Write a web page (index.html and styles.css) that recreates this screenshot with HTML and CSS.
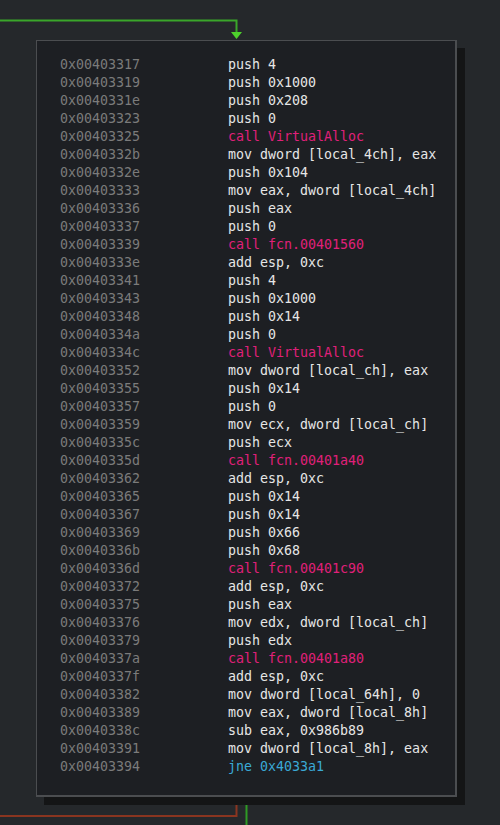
FILE: index.html
```html
<!DOCTYPE html>
<html>
<head>
<meta charset="utf-8">
<link rel="stylesheet" href="styles.css">
</head>
<body>
<div class="canvas">
  <svg class="edges" width="500" height="825" viewBox="0 0 500 825">
    <path d="M0 20.5 H236.5 V32" fill="none" stroke="#3aa62a" stroke-width="2"/>
    <polygon points="231,32 242,32 236.5,39" fill="#4ed22c"/>
    <path d="M236.5 797 V816 H0" fill="none" stroke="#8a3520" stroke-width="2"/>
    <path d="M246.5 797 V825" fill="none" stroke="#2f9a25" stroke-width="2"/>
  </svg>
  <div class="node">
    <div class="row"><span class="addr">0x00403317</span><span class="op">push 4</span></div>
    <div class="row"><span class="addr">0x00403319</span><span class="op">push 0x1000</span></div>
    <div class="row"><span class="addr">0x0040331e</span><span class="op">push 0x208</span></div>
    <div class="row"><span class="addr">0x00403323</span><span class="op">push 0</span></div>
    <div class="row"><span class="addr">0x00403325</span><span class="op call">call VirtualAlloc</span></div>
    <div class="row"><span class="addr">0x0040332b</span><span class="op">mov dword [local_4ch], eax</span></div>
    <div class="row"><span class="addr">0x0040332e</span><span class="op">push 0x104</span></div>
    <div class="row"><span class="addr">0x00403333</span><span class="op">mov eax, dword [local_4ch]</span></div>
    <div class="row"><span class="addr">0x00403336</span><span class="op">push eax</span></div>
    <div class="row"><span class="addr">0x00403337</span><span class="op">push 0</span></div>
    <div class="row"><span class="addr">0x00403339</span><span class="op call">call fcn.00401560</span></div>
    <div class="row"><span class="addr">0x0040333e</span><span class="op">add esp, 0xc</span></div>
    <div class="row"><span class="addr">0x00403341</span><span class="op">push 4</span></div>
    <div class="row"><span class="addr">0x00403343</span><span class="op">push 0x1000</span></div>
    <div class="row"><span class="addr">0x00403348</span><span class="op">push 0x14</span></div>
    <div class="row"><span class="addr">0x0040334a</span><span class="op">push 0</span></div>
    <div class="row"><span class="addr">0x0040334c</span><span class="op call">call VirtualAlloc</span></div>
    <div class="row"><span class="addr">0x00403352</span><span class="op">mov dword [local_ch], eax</span></div>
    <div class="row"><span class="addr">0x00403355</span><span class="op">push 0x14</span></div>
    <div class="row"><span class="addr">0x00403357</span><span class="op">push 0</span></div>
    <div class="row"><span class="addr">0x00403359</span><span class="op">mov ecx, dword [local_ch]</span></div>
    <div class="row"><span class="addr">0x0040335c</span><span class="op">push ecx</span></div>
    <div class="row"><span class="addr">0x0040335d</span><span class="op call">call fcn.00401a40</span></div>
    <div class="row"><span class="addr">0x00403362</span><span class="op">add esp, 0xc</span></div>
    <div class="row"><span class="addr">0x00403365</span><span class="op">push 0x14</span></div>
    <div class="row"><span class="addr">0x00403367</span><span class="op">push 0x14</span></div>
    <div class="row"><span class="addr">0x00403369</span><span class="op">push 0x66</span></div>
    <div class="row"><span class="addr">0x0040336b</span><span class="op">push 0x68</span></div>
    <div class="row"><span class="addr">0x0040336d</span><span class="op call">call fcn.00401c90</span></div>
    <div class="row"><span class="addr">0x00403372</span><span class="op">add esp, 0xc</span></div>
    <div class="row"><span class="addr">0x00403375</span><span class="op">push eax</span></div>
    <div class="row"><span class="addr">0x00403376</span><span class="op">mov edx, dword [local_ch]</span></div>
    <div class="row"><span class="addr">0x00403379</span><span class="op">push edx</span></div>
    <div class="row"><span class="addr">0x0040337a</span><span class="op call">call fcn.00401a80</span></div>
    <div class="row"><span class="addr">0x0040337f</span><span class="op">add esp, 0xc</span></div>
    <div class="row"><span class="addr">0x00403382</span><span class="op">mov dword [local_64h], 0</span></div>
    <div class="row"><span class="addr">0x00403389</span><span class="op">mov eax, dword [local_8h]</span></div>
    <div class="row"><span class="addr">0x0040338c</span><span class="op">sub eax, 0x986b89</span></div>
    <div class="row"><span class="addr">0x00403391</span><span class="op">mov dword [local_8h], eax</span></div>
    <div class="row"><span class="addr">0x00403394</span><span class="op jump">jne 0x4033a1</span></div>
  </div>
</div>
</body>
</html>
```
FILE: styles.css
```css
html, body {
  margin: 0;
  padding: 0;
  background: #25282b;
  overflow: hidden;
}
.canvas {
  position: relative;
  width: 500px;
  height: 825px;
}
.edges {
  position: absolute;
  left: 0;
  top: 0;
}
.node {
  position: absolute;
  left: 36px;
  top: 40px;
  width: 421px;
  height: 757px;
  box-sizing: border-box;
  border: 1px solid #4b4d50;
  border-width: 1px 2px 2px 1px;
  background: #1d1f23;
  box-shadow: 8px 8px 0 #141516;
  padding: 15px 0 0 23px;
  font-family: "DejaVu Sans Mono", monospace;
  font-size: 13.3px;
}
.row {
  display: flex;
  height: 18px;
  line-height: 18px;
  white-space: pre;
}
.addr {
  width: 168px;
  color: #7b7b7b;
}
.op {
  color: #e6e6e6;
}
.op.call {
  color: #e0207a;
}
.op.jump {
  color: #3aa9d6;
}
```
